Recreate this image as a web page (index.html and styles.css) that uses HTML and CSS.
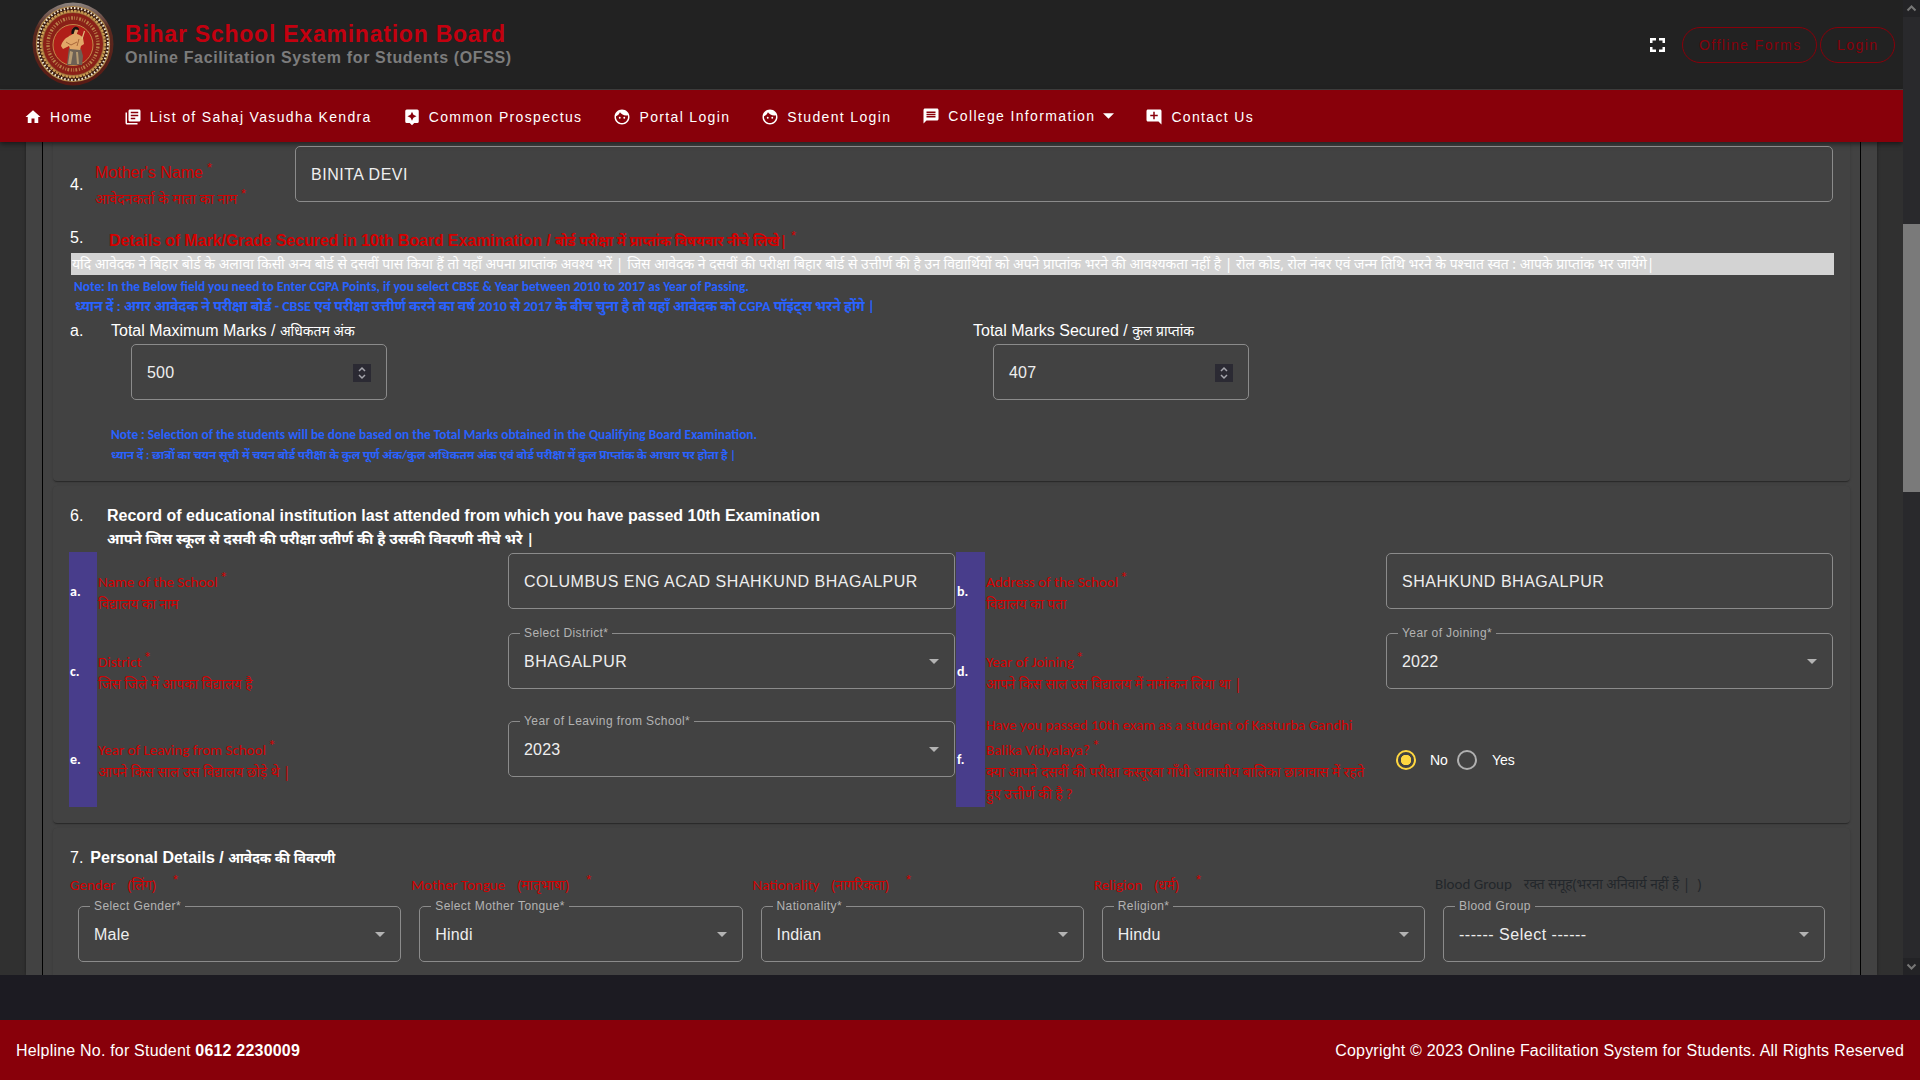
FILE: index.html
```html
<!DOCTYPE html>
<html lang="en">
<head>
<meta charset="utf-8">
<title>Bihar School Examination Board - OFSS</title>
<link rel="stylesheet" href="styles.css">
</head>
<body>
<svg class="defs" width="0" height="0">
  <symbol id="i-face" viewBox="0 0 24 24"><path d="M9 11.75a1.25 1.25 0 1 0 0 2.5 1.25 1.25 0 0 0 0-2.5zm6 0a1.25 1.25 0 1 0 0 2.5 1.25 1.25 0 0 0 0-2.5zM12 2C6.48 2 2 6.48 2 12s4.480 10 10 10 10-4.480 10-10S17.520 2 12 2zm0 18c-4.410 0-8-3.590-8-8 0-.29.020-.58.050-.86 2.360-1.050 4.230-2.980 5.210-5.370C11.070 8.330 14.050 10 17.420 10c.78 0 1.530-.09 2.250-.26.21.71.33 1.470.33 2.260 0 4.410-3.590 8-8 8z"/></symbol>
  <symbol id="i-drop" viewBox="0 0 10 5"><path d="M0 0h10L5 5z"/></symbol>
</svg>
<div class="window">
<div class="page">
  <header class="top">
    <svg class="logo" viewBox="0 0 82 84">
      <defs><linearGradient id="rim" x1="0" y1="0" x2="0" y2="1"><stop offset="0" stop-color="#8d8580"/><stop offset=".3" stop-color="#5a2a20"/><stop offset="1" stop-color="#5a1a14"/></linearGradient></defs>
      <ellipse cx="41" cy="42" rx="40.500" ry="41.500" fill="url(#rim)"/>
      <ellipse cx="41" cy="42" rx="36.500" ry="37.500" fill="#3a1a10" stroke="#b28b4c" stroke-width="1.200"/>
      <ellipse cx="41" cy="42" rx="35" ry="36" fill="none" stroke="#f0e6d0" stroke-width="2" stroke-dasharray="1.600 1.900"/>
      <ellipse cx="41" cy="42" rx="32" ry="33" fill="#9a6a38" stroke="#c99b52" stroke-width="2.400" stroke-dasharray="2.500 1"/>
      <ellipse cx="41" cy="42" rx="30" ry="31" fill="#8a2018"/>
      <ellipse cx="41" cy="42" rx="25" ry="26" fill="none" stroke="#b9824a" stroke-width="3.400" stroke-dasharray="1 1.700 1.800 1.300 .8 1.600"/>
      <ellipse cx="41" cy="43" rx="20" ry="20.500" fill="#b01e19" stroke="#c48b4a" stroke-width="1"/>
      <path d="M37 46l12 1 2 7-1 9H35l1-10z" fill="#6d6054"/>
      <path d="M38 49l-2 13h3l2-12zM44 50l1 12h2l-1-12z" fill="#b59a72"/>
      <path d="M36 35c2-2 4-2 5-3v-3h4v3c3 1 5 2 6 4l1 6-3 2-1 4-10-1-1-3-6 3-2-3c1-4 4-8 7-9z" fill="#e2a768"/>
      <path d="M34 40l5 3 6-3M47 37l-2 7" fill="none" stroke="#8e4a25" stroke-width=".7"/>
      <circle cx="43" cy="28.500" r="3" fill="#dca46a"/>
      <path d="M39.500 32c-1-9 8-9 7.500-4l-4-.5-1.500 4.500z" fill="#17110f"/>
      <path d="M50 37l2.500-8" stroke="#e0c080" stroke-width="1.200"/>
    </svg>
    <div class="brand">
      <div class="brand-name">Bihar School Examination Board</div>
      <div class="brand-sub">Online Facilitation System for Students (OFSS)</div>
    </div>
    <svg class="full" viewBox="0 0 15 14"><path d="M0 5V0h6v2.500H2.500V5zM9 0h6v5h-2.500V2.500H9zM0 9h2.500v2.500H6V14H0zM12.500 9H15v5H9v-2.500h3.500z"/></svg>
    <a class="pill pill-offline">Offline Forms</a>
    <a class="pill pill-login">Login</a>
  </header>
  <nav class="menu">
    <a><svg viewBox="0 0 24 24"><path d="M10 20v-6h4v6h5v-8h3L12 3 2 12h3v8z"/></svg>Home</a>
    <a><svg viewBox="0 0 24 24"><path d="M4 6H2v14c0 1.100.9 2 2 2h14v-2H4V6zm16-4H8c-1.100 0-2 .9-2 2v12c0 1.100.9 2 2 2h12c1.100 0 2-.9 2-2V4c0-1.100-.9-2-2-2zm-1 9H9V9h10v2zm-4 4H9v-2h6v2zm4-8H9V5h10v2z"/></svg>List of Sahaj Vasudha Kendra</a>
    <a><svg viewBox="0 0 24 24"><path d="M19 2H5a2 2 0 0 0-2 2v14a2 2 0 0 0 2 2h4l3 3 3-3h4a2 2 0 0 0 2-2V4a2 2 0 0 0-2-2zm-5.120 10.880L12 17l-1.880-4.120L6 11l4.120-1.880L12 5l1.880 4.120L18 11z"/></svg>Common Prospectus</a>
    <a><svg><use href="#i-face"/></svg>Portal Login</a>
    <a><svg><use href="#i-face"/></svg>Student Login</a>
    <a class="raised"><svg viewBox="0 0 24 24"><path d="M20 2H4c-1.100 0-2 .9-2 2v18l4-4h14c1.100 0 2-.9 2-2V4c0-1.100-.9-2-2-2zm-2 12H6v-2h12v2zm0-3H6V9h12v2zm0-3H6V6h12v2z"/></svg>College Information<svg class="caret"><use href="#i-drop"/></svg></a>
    <a><svg viewBox="0 0 24 24"><path d="M22 4c0-1.100-.9-2-2-2H4c-1.100 0-2 .9-2 2v12c0 1.100.9 2 2 2h14l4 4V4zm-5 7h-4v4h-2v-4H7V9h4V5h2v4h4z"/></svg>Contact Us</a>
  </nav>
  <main class="content"><div class="paper"><div class="sheet">

    <section class="card card-marks">
      <div class="row-mother">
        <div class="num">4.</div>
        <div class="label-pair req">
          <div class="line">Mother's Name<i class="star">*</i></div>
          <div class="line hi">आवेदनकर्ता के माता का नाम<i class="star">*</i></div>
        </div>
        <div class="field">BINITA DEVI</div>
      </div>
      <div class="row-five">
        <div class="num">5.</div>
        <div class="line req strong"><span class="tight">Details of Mark/Grade Secured in 10th Board Examination / </span><span class="hi hi-board">बोर्ड परीक्षा में प्राप्तांक विषयवार नीचे लिखे|</span><i class="star">*</i></div>
      </div>
      <div class="bar"><span class="hi">यदि आवेदक ने बिहार बोर्ड के अलावा किसी अन्य बोर्ड से दसवीं पास किया हैं तो यहाँ अपना प्राप्तांक अवश्य भरें | जिस आवेदक ने दसवीं की परीक्षा बिहार बोर्ड से उत्तीर्ण की है उन विद्यार्थियों को अपने प्राप्तांक भरने की आवश्यकता नहीं है | रोल कोड, रोल नंबर एवं जन्म तिथि भरने के पश्चात स्वत : आपके प्राप्तांक भर जायेंगे|</span></div>
      <div class="note note-cgpa">Note: In the Below field you need to Enter CGPA Points, if you select CBSE &amp; Year between 2010 to 2017 as Year of Passing.</div>
      <div class="note note-cgpa-hi">ध्यान दें : अगर आवेदक ने परीक्षा बोर्ड - CBSE एवं परीक्षा उत्तीर्ण करने का वर्ष 2010 से 2017 के बीच चुना है तो यहाँ आवेदक को CGPA पॉइंट्स भरने होंगे |</div>
      <div class="row-totals">
        <div class="num">a.</div>
        <div class="total"><div class="line">Total Maximum Marks / <span class="hi">अधिकतम अंक</span></div>
          <div class="field">500<svg class="spin" viewBox="0 0 18 18"><path d="M6 7l3-3 3 3M6 11l3 3 3-3"/></svg></div></div>
        <div class="total"><div class="line">Total Marks Secured / <span class="hi">कुल प्राप्तांक</span></div>
          <div class="field">407<svg class="spin" viewBox="0 0 18 18"><path d="M6 7l3-3 3 3M6 11l3 3 3-3"/></svg></div></div>
      </div>
      <div class="note note-sel">Note : Selection of the students will be done based on the Total Marks obtained in the Qualifying Board Examination.</div>
      <div class="note note-sel-hi">ध्यान दें : छात्रों का चयन सूची में चयन बोर्ड परीक्षा के कुल पूर्ण अंक/कुल अधिकतम अंक एवं बोर्ड परीक्षा में कुल प्राप्तांक के आधार पर होता है |</div>
    </section>

    <section class="card card-school">
      <div class="school-head">
        <div class="num">6.</div>
        <div class="strong"><div class="line">Record of educational institution last attended from which you have passed 10th Examination</div>
        <div class="line hi hi-school">आपने जिस स्कूल से दसवी की परीक्षा उतीर्ण की है उसकी विवरणी नीचे भरे |</div></div>
      </div>
      <div class="school-grid">
        <div class="mark">a.</div>
        <div class="q"><div>Name of the School<i class="star">*</i></div><div class="hi">विद्यालय का नाम</div></div>
        <div class="field caps">COLUMBUS ENG ACAD SHAHKUND BHAGALPUR</div>
        <div class="mark">b.</div>
        <div class="q"><div>Address of the School<i class="star">*</i></div><div class="hi">विद्यालय का पता</div></div>
        <div class="field caps">SHAHKUND BHAGALPUR</div>

        <div class="mark">c.</div>
        <div class="q"><div>District<i class="star">*</i></div><div class="hi">जिस जिले में आपका विद्यालय है</div></div>
        <div class="field caps"><b>Select District*</b>BHAGALPUR<svg class="drop"><use href="#i-drop"/></svg></div>
        <div class="mark">d.</div>
        <div class="q"><div>Year of Joining<i class="star">*</i></div><div class="hi">आपने किस साल उस विद्यालय में नामांकन लिया था |</div></div>
        <div class="field"><b>Year of Joining*</b>2022<svg class="drop"><use href="#i-drop"/></svg></div>

        <div class="mark tall">e.</div>
        <div class="q tall"><div>Year of Leaving from School<i class="star">*</i></div><div class="hi">आपने किस साल उस विद्यालय छोड़े थे |</div></div>
        <div class="field tall"><b>Year of Leaving from School*</b>2023<svg class="drop"><use href="#i-drop"/></svg></div>
        <div class="mark tall">f.</div>
        <div class="q four"><div class="first">Have you passed 10th exam as a student of Kasturba Gandhi</div><div>Balika Vidyalaya?<i class="star">*</i></div><div class="hi">क्या आपने दसवीं की परीक्षा कस्तूरबा गाँधी आवासीय बालिका छात्रावास में रहते</div><div class="hi">हुए उत्तीर्ण की है ?</div></div>
        <div class="radios"><span class="dot on"></span><span class="opt">No</span><span class="dot"></span><span class="opt">Yes</span></div>
      </div>
    </section>

    <section class="card card-person">
      <div class="person-head"><span class="num">7.</span><span class="strong">Personal Details / <span class="hi hi-person">आवेदक की विवरणी</span></span></div>
      <div class="person-grid">
        <div><div class="cap">Gender<span class="hi">(लिंग)</span><i class="star">*</i></div><div class="field"><b>Select Gender*</b>Male<svg class="drop"><use href="#i-drop"/></svg></div></div>
        <div><div class="cap">Mother Tongue<span class="hi">(मातृभाषा)</span><i class="star">*</i></div><div class="field"><b>Select Mother Tongue*</b>Hindi<svg class="drop"><use href="#i-drop"/></svg></div></div>
        <div><div class="cap">Nationality<span class="hi">(नागरिकता)</span><i class="star">*</i></div><div class="field"><b>Nationality*</b>Indian<svg class="drop"><use href="#i-drop"/></svg></div></div>
        <div><div class="cap">Religion<span class="hi">(धर्म)</span><i class="star">*</i></div><div class="field"><b>Religion*</b>Hindu<svg class="drop"><use href="#i-drop"/></svg></div></div>
        <div><div class="cap cap-dark">Blood Group<span class="hi">रक्त समूह(भरना अनिवार्य नहीं है | &nbsp;)</span></div><div class="field caps"><b>Blood Group</b>------ Select ------<svg class="drop"><use href="#i-drop"/></svg></div></div>
      </div>
    </section>
  </div></div></main>
</div>
<div class="scroll">
  <svg viewBox="0 0 17 17"><path d="M4.500 10.500l4-4 4 4"/></svg>
  <div class="thumb"></div>
  <svg viewBox="0 0 17 17"><path d="M4.500 6.500l4 4 4-4"/></svg>
</div>
</div>
<footer class="foot"><div>Helpline No. for Student <strong>0612 2230009</strong></div><div>Copyright © 2023 Online Facilitation System for Students. All Rights Reserved</div></footer>
</body>
</html>
```
FILE: styles.css
```css
* { box-sizing: border-box; }
body { margin: 0; width: 1920px; height: 1080px; overflow: hidden; background: #1c1b22; color: #fff; font: 16px/20px "Liberation Sans", Arial, "Noto Sans", "Noto Sans Devanagari", sans-serif; }
.defs { position: absolute; }
.window { display: flex; height: 975px; margin-bottom: 45px; }
.page { width: 1903px; display: flex; flex-direction: column; overflow: hidden; }
.hi { font-family: "Noto Sans", "Noto Sans Devanagari", "Liberation Sans", sans-serif; font-size: 13.95px; white-space: nowrap; }
.line { height: 20px; white-space: pre; }
.line .hi { line-height: 0; }
.req { color: #d50000; }
.strong { font-weight: 700; }
.tight { letter-spacing: -.1px; }
.star { font-family: "Liberation Sans", Arial, sans-serif; font-style: normal; font-weight: 400; font-size: 13px; line-height: 0; vertical-align: 6px; margin-left: 4px; color: #d50000; }

.top { flex: none; height: 90px; background: #222; border-bottom: 1px solid #424242; display: flex; align-items: center; padding-left: 32px; }
.logo { width: 82px; height: 84px; margin-bottom: 1px; }
.brand { margin-left: 11px; flex: 1; white-space: nowrap; font-weight: 700; }
.brand-name { font-size: 23px; line-height: 26px; letter-spacing: .77px; color: #c4000f; }
.brand-sub { font-size: 16px; line-height: 20px; padding-top: 1px; letter-spacing: .64px; color: #7c7c7c; }
.full { width: 15px; height: 14px; margin-right: 17px; fill: #fff; }
.pill { height: 36px; border: 1px solid #88000a; border-radius: 18px; color: #88000a; line-height: 34px; padding-left: 16px; margin-right: 3px; white-space: nowrap; font-size: 14px; letter-spacing: 1.45px; }
.pill-offline { width: 135px; }
.pill-login { width: 75px; margin-right: 8px; }

.menu { flex: none; height: 52px; background: #88000a; display: flex; align-items: center; gap: 31px; padding-left: 24px; position: relative; box-shadow: 0 2px 5px rgba(0, 0, 0, .5); font-size: 14px; letter-spacing: 1.35px; white-space: nowrap; }
.menu a { display: flex; align-items: center; gap: 8px; padding-top: 2px; }
.menu a.raised { padding-top: 0; }
.menu svg { width: 18px; height: 18px; fill: #fff; }
.menu .caret { width: 11px; height: 6px; }

.content { flex: 1; background: #303030; padding: 0 26px; overflow: hidden; }
.paper { background: #424242; height: 833px; padding: 0 16px; box-shadow: 0 0 3px rgba(0, 0, 0, .4); }
.sheet { border: solid #000; border-width: 0 1px; padding: 0 10px; height: 833px; }
.card { background: #424242; box-shadow: 0 2px 1px -1px rgba(0, 0, 0, .2), 0 1px 1px rgba(0, 0, 0, .14), 0 1px 3px rgba(0, 0, 0, .12); border-radius: 4px; padding: 0 17px; }

.field { height: 56px; border: 1px solid #8b8b8b; border-radius: 5px; display: flex; align-items: center; padding: 1px 15px 0; position: relative; color: #eee; white-space: nowrap; letter-spacing: .2px; }
.field.caps, .row-mother .field { letter-spacing: .52px; }
.field b { position: absolute; left: 11px; top: -8px; padding: 0 4px; background: #424242; font-weight: 400; font-size: 12px; line-height: 14px; letter-spacing: .4px; color: #b3b3b3; }
.drop { width: 10px; height: 5px; margin-left: auto; fill: #b3b3b3; }
.spin { width: 18px; height: 18px; margin-left: auto; background: #2b2a33; fill: none; stroke: #a5a5ac; stroke-width: 1.5; }

.card-marks { height: 339px; border-radius: 0 0 4px 4px; }
.row-mother { display: grid; grid-template-columns: 25px 200px 1538px; height: 80px; align-items: start; }
.row-mother .num { padding-top: 33px; }
.row-mother .field { margin-top: 4px; }
.label-pair { display: grid; gap: 6px; padding-top: 21px; }
.row-five { display: grid; grid-template-columns: 39px 1fr; height: 31px; align-items: start; }
.row-five .num { padding-top: 6px; }
.row-five .line { padding-top: 9px; height: 28px; }
.hi-board { font-size: 13.93px; }
.bar { margin: 0 -1px 0 1px; width: 1763px; height: 22px; line-height: 22px; background: #d3d3d3; padding-left: 1px; white-space: nowrap; }
.note { font: 700 13.33px/20px Carlito, Calibri, "Open Sans", "Noto Sans", sans-serif; color: #2962ff; white-space: nowrap; height: 20px; }
.note-cgpa { margin: 2px 0 0 4px; }
.note-cgpa-hi { margin-left: 5px; font-size: 14.07px; }
.row-totals { display: grid; grid-template-columns: 41px 862px 1fr; margin-top: 4px; height: 104px; align-items: start; }
.total .field { width: 256px; margin: 3px 0 0 20px; }
.note-sel, .note-sel-hi { margin-left: 41px; }
.note-sel-hi { font-size: 11.78px; }

.card-school { margin-top: 5px; height: 337px; padding-top: 20px; }
.school-head { display: grid; grid-template-columns: 37px 1fr; height: 46px; }
.hi-school { padding-top: 2px; font-size: 14.65px; }
.school-grid { display: grid; grid-template-columns: 28px 411px 448px 29px 401px 447px; grid-template-rows: 80px 80px 95px; margin-left: -1px; font: 15px/22px Carlito, Calibri, "Open Sans", sans-serif; }
.mark { background: #483d8b; padding: 29px 0 0 1px; font-weight: 700; font-size: 14px; }
.mark.tall { padding-top: 37px; }
.q { color: #d50000; padding: 19px 0 0 1px; white-space: nowrap; }
.q .hi { font-size: 13.6px; }
.q .star { font-family: inherit; font-size: 16px; vertical-align: 4px; margin-left: 2px; }
.q.tall { padding-top: 27px; }
.q.four { padding-top: 2px; }
.q .first { height: 25px; }
.school-grid .field { font: 16px/20px "Liberation Sans", Arial, sans-serif; margin: 1px 1px 0 0; width: 447px; }
.school-grid .field.tall { margin-top: 9px; }
.radios { display: flex; align-items: center; height: 22px; margin-top: 37px; padding-left: 10px; font: 14px/20px "Liberation Sans", Arial, sans-serif; }
.dot { width: 20px; height: 20px; border: 2px solid #b0b0b0; border-radius: 50%; }
.dot.on { border-color: #ffd740; background: radial-gradient(circle, #ffd740 5px, transparent 5.5px); }
.opt { margin: 0 9px 0 14px; }
.dot + .opt:last-child { margin-left: 15px; }

.card-person { margin-top: 5px; height: 160px; padding-top: 20px; }
.person-head { height: 23px; line-height: 20px; white-space: pre; }
.person-head .num { margin-right: 7px; }
.hi-person { font-size: 13.7px; line-height: 0; }
.person-grid { display: grid; grid-template-columns: repeat(4, 341.25px) 400px; }
.cap { height: 35px; padding-top: 4px; font: 15px/20px Carlito, Calibri, "Open Sans", sans-serif; color: #d50000; white-space: nowrap; }
.cap .hi { margin-left: 12px; font-size: 13.6px; line-height: 0; }
.cap .star { margin-left: 17px; }
.cap-dark { color: #23272b; padding-top: 3px; }
.person-grid .field { margin: 0 10px 0 8px; }

.scroll { width: 17px; background: #29292c; display: flex; flex-direction: column; }
.scroll svg { width: 17px; height: 17px; fill: none; stroke: #777; stroke-width: 2; background: #232326; }
.thumb { margin: 207px 0 auto; height: 268px; background: #7a7a7a; }
.foot { height: 60px; background: #88000a; display: flex; justify-content: space-between; align-items: center; padding: 2px 16px 0; letter-spacing: .2px; }
```
